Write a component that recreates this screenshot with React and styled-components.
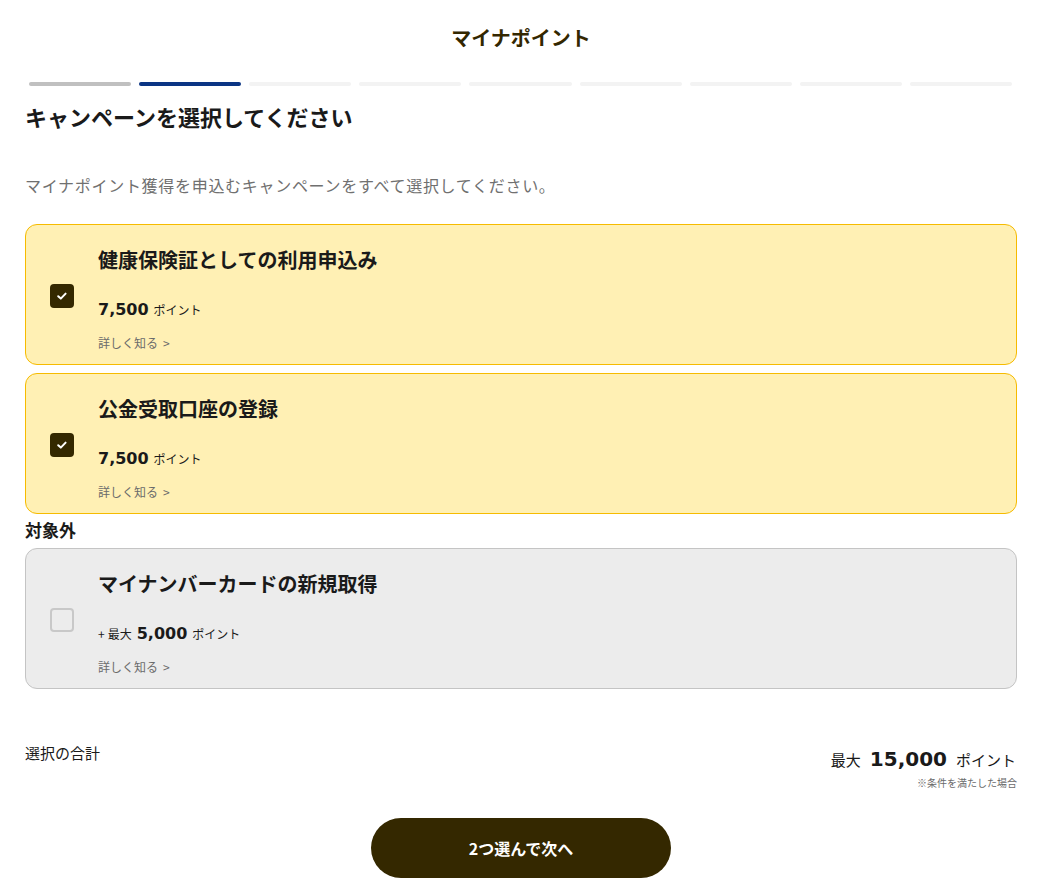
import React, { useState } from "react";
import styled, { createGlobalStyle } from "styled-components";

const Global = createGlobalStyle`
  * { box-sizing: border-box; }
  body {
    margin: 0;
    background: #ffffff;
    font-family: "DejaVu Sans", "Noto Sans CJK JP", sans-serif;
    color: #1a1a1a;
  }
`;

const Page = styled.div`
  width: 1042px;
  padding: 0 25px 0 25px;
`;

const Header = styled.header`
  height: 76px;
  display: flex;
  align-items: center;
  justify-content: center;
  padding-bottom: 2px;
`;

const AppTitle = styled.h1`
  margin: 0;
  font-family: "Noto Sans CJK JP", sans-serif;
  font-size: 20px;
  font-weight: 700;
  color: #332700;
`;

const Steps = styled.div`
  display: grid;
  grid-template-columns: repeat(9, 1fr);
  gap: 8px;
  padding: 0 5px 0 4px;
  margin-top: 6px;
`;

const Step = styled.div`
  height: 4px;
  border-radius: 2px;
  background: ${(p) => (p.$state === "done" ? "#c0c0c0" : p.$state === "active" ? "#0b3584" : "#f3f3f3")};
`;

const Heading = styled.h2`
  margin: 14px 0 0;
  font-family: "Noto Sans CJK JP", sans-serif;
  font-size: 22px;
  font-weight: 700;
  line-height: 32px;
  color: #1a1a1a;
`;

const Lead = styled.p`
  margin: 41px 0 0;
  font-family: "Noto Sans CJK JP", sans-serif;
  font-size: 16px;
  line-height: 24px;
  letter-spacing: 0.7px;
  color: #707070;
`;

const List = styled.div`
  margin-top: 27px;
  display: flex;
  flex-direction: column;
  gap: 8px;
`;

const Card = styled.label`
  display: flex;
  align-items: flex-start;
  gap: 24px;
  height: 141px;
  padding: 0 24px;
  border-radius: 12px;
  border: 1px solid ${(p) => (p.$disabled ? "#c4c4c4" : "#f6bb00")};
  background: ${(p) => (p.$disabled ? "#ececec" : "#fff0b4")};
  cursor: ${(p) => (p.$disabled ? "default" : "pointer")};
`;

const Box = styled.span`
  flex: none;
  align-self: center;
  width: 24px;
  height: 24px;
  border-radius: 4px;
  display: flex;
  align-items: center;
  justify-content: center;
  background: ${(p) => (p.$checked ? "#342800" : "#ececec")};
  border: ${(p) => (p.$checked ? "none" : "2px solid #c8c8c8")};
  margin-top: 2px;
`;

const Body = styled.div`
  display: flex;
  flex-direction: column;
  padding-top: 20px;
`;

const CardTitle = styled.div`
  font-family: "Noto Sans CJK JP", sans-serif;
  font-size: 20px;
  font-weight: 700;
  line-height: 30px;
  color: #1a1a1a;
`;

const Points = styled.div`
  margin-top: 23px;
  display: flex;
  align-items: baseline;
  gap: 5px;
  line-height: 24px;
`;

const Prefix = styled.span`
  font-family: "Noto Sans CJK JP", sans-serif;
  font-size: 12px;
  color: #1a1a1a;
`;

const Plus = styled.span`
  margin-right: 3px;
`;

const Num = styled.span`
  font-family: "DejaVu Sans", sans-serif;
  font-size: ${(p) => p.$size || 16}px;
  font-weight: 700;
  color: #1a1a1a;
`;

const Unit = styled.span`
  font-family: "Noto Sans CJK JP", sans-serif;
  font-size: ${(p) => p.$size || 12}px;
  color: #1a1a1a;
`;

const More = styled.a`
  margin-top: 12px;
  font-family: "Noto Sans CJK JP", sans-serif;
  font-size: 12px;
  line-height: 18px;
  color: #6b6b6b;
  text-decoration: none;
`;

const Chevron = styled.span`
  margin-left: 5px;
`;

const GroupLabel = styled.div`
  margin: -5px 0 -3px;
  font-family: "Noto Sans CJK JP", sans-serif;
  font-size: 17px;
  font-weight: 700;
  line-height: 26px;
  color: #1a1a1a;
`;

const Summary = styled.div`
  margin-top: 43px;
  display: flex;
  justify-content: space-between;
  align-items: flex-start;
`;

const SummaryLabel = styled.div`
  margin-top: 10px;
  font-family: "Noto Sans CJK JP", sans-serif;
  font-size: 15px;
  line-height: 22px;
  color: #1a1a1a;
`;

const Total = styled.div`
  margin-top: 9px;
  display: flex;
  flex-direction: column;
  align-items: flex-end;
`;

const TotalLine = styled.div`
  display: flex;
  align-items: baseline;
  gap: 9px;
  line-height: 36px;
  padding-right: 1px;
`;

const Note = styled.div`
  margin-top: -2px;
  font-family: "Noto Sans CJK JP", sans-serif;
  font-size: 10px;
  line-height: 14px;
  color: #6b6b6b;
`;

const Footer = styled.div`
  display: flex;
  justify-content: center;
  margin-top: 28px;
  padding-bottom: 14px;
`;

const NextButton = styled.button`
  width: 300px;
  height: 60px;
  border: none;
  border-radius: 30px;
  background: #342800;
  color: #ffffff;
  font-family: "Noto Sans CJK JP", sans-serif;
  font-size: 16px;
  font-weight: 700;
  cursor: pointer;
`;

const Check = () => (
  <svg width="12" height="12" viewBox="0 0 12 12" fill="none">
    <path d="M2.2 6.2 L4.8 8.6 L9.6 3.6" stroke="#ffffff" strokeWidth="2" strokeLinecap="round" strokeLinejoin="round" />
  </svg>
);

const steps = ["done", "active", "", "", "", "", "", "", ""];

const campaigns = [
  { id: 1, title: "健康保険証としての利用申込み", points: "7,500" },
  { id: 2, title: "公金受取口座の登録", points: "7,500" },
];

export default function App() {
  const [checked, setChecked] = useState({ 1: true, 2: true });
  const count = Object.values(checked).filter(Boolean).length;

  return (
    <Page>
      <Global />
      <Header>
        <AppTitle>マイナポイント</AppTitle>
      </Header>
      <Steps>
        {steps.map((s, i) => (
          <Step key={i} $state={s} />
        ))}
      </Steps>
      <Heading>キャンペーンを選択してください</Heading>
      <Lead>マイナポイント獲得を申込むキャンペーンをすべて選択してください。</Lead>
      <List>
        {campaigns.map((c) => (
          <Card key={c.id} onClick={() => setChecked({ ...checked, [c.id]: !checked[c.id] })}>
            <Box $checked={checked[c.id]}>{checked[c.id] && <Check />}</Box>
            <Body>
              <CardTitle>{c.title}</CardTitle>
              <Points>
                <Num>{c.points}</Num>
                <Unit>ポイント</Unit>
              </Points>
              <More>
                詳しく知る<Chevron>&gt;</Chevron>
              </More>
            </Body>
          </Card>
        ))}
        <GroupLabel>対象外</GroupLabel>
        <Card $disabled>
          <Box />
          <Body>
            <CardTitle>マイナンバーカードの新規取得</CardTitle>
            <Points>
              <Prefix>
                <Plus>+</Plus>最大
              </Prefix>
              <Num>5,000</Num>
              <Unit>ポイント</Unit>
            </Points>
            <More>
              詳しく知る<Chevron>&gt;</Chevron>
            </More>
          </Body>
        </Card>
      </List>
      <Summary>
        <SummaryLabel>選択の合計</SummaryLabel>
        <Total>
          <TotalLine>
            <Unit $size={15}>最大</Unit>
            <Num $size={20}>15,000</Num>
            <Unit $size={15}>ポイント</Unit>
          </TotalLine>
          <Note>※条件を満たした場合</Note>
        </Total>
      </Summary>
      <Footer>
        <NextButton>{count}つ選んで次へ</NextButton>
      </Footer>
    </Page>
  );
}
